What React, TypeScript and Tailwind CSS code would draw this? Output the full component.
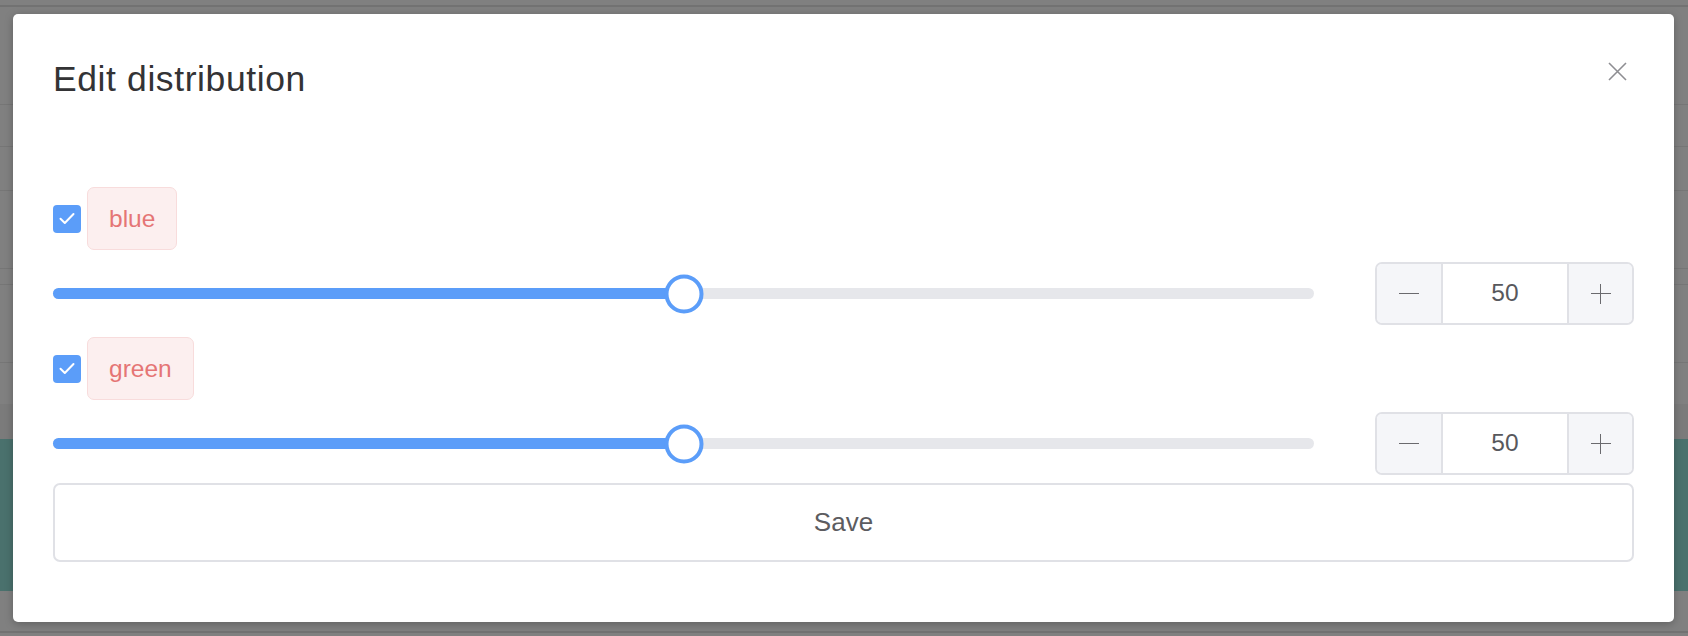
import React from "react";

const font = { fontFamily: '"Liberation Sans", Arial, sans-serif' };

function Check() {
  return (
    <div className="w-[28px] h-[28px] rounded-[4px] bg-[#5b9df9] flex items-center justify-center shrink-0">
      <svg width="16" height="13" viewBox="0 0 16 13" fill="none">
        <path d="M1.5 6.8 L5.8 11 L14.5 2" stroke="white" strokeWidth="2" strokeLinecap="round" strokeLinejoin="round" />
      </svg>
    </div>
  );
}

function Stepper({ value }: { value: number }) {
  return (
    <div className="w-[259px] h-[63px] shrink-0 flex border-2 border-[#e0e1e6] rounded-[7px] overflow-hidden">
      <div className="w-[66px] bg-[#f5f6f9] flex items-center justify-center border-r-2 border-[#e0e1e6]">
        <div className="w-[20px] h-[1.5px] bg-[#6a6a6e]" />
      </div>
      <div className="flex-1 bg-white flex items-center justify-center text-[24.5px] text-[#58585c]">{value}</div>
      <div className="w-[65px] bg-[#f5f6f9] flex items-center justify-center border-l-2 border-[#e0e1e6]">
        <div className="relative w-[20px] h-[20px]">
          <div className="absolute left-0 top-[9px] w-[20px] h-[1.5px] bg-[#6a6a6e]" />
          <div className="absolute top-0 left-[9px] h-[20px] w-[1.5px] bg-[#6a6a6e]" />
        </div>
      </div>
    </div>
  );
}

function Item({ label, value }: { label: string; value: number }) {
  return (
    <div className="flex flex-col">
      <div className="flex items-center gap-[6px] h-[63px]">
        <Check />
        <div className="h-[63px] px-[21px] pt-[2px] flex items-center rounded-[7px] bg-[#fcefef] border border-[#f8dcdc] text-[24.5px] text-[#e57575]">
          {label}
        </div>
      </div>
      <div className="mt-[12px] flex items-center h-[63px] gap-[61px]">
        <div className="relative flex-1 h-[11px] rounded-full bg-[#e6e7eb]">
          <div className="h-full rounded-full bg-[#5b9df9]" style={{ width: `${value}%` }} />
          <div
            className="absolute top-1/2 w-[39px] h-[39px] rounded-full bg-white border-[4px] border-[#5b9df9] -translate-x-1/2 -translate-y-1/2"
            style={{ left: `${value}%` }}
          />
        </div>
        <Stepper value={value} />
      </div>
    </div>
  );
}

export default function App() {
  return (
    <div className="relative w-[1688px] h-[636px] overflow-hidden bg-[#808080]" style={font}>
      {/* dimmed background page */}
      <div className="flex flex-col">
        <div className="h-[5px]" />
        <div className="h-[2px] bg-[#727272]" />
        <div className="h-[97px]" />
        <div className="h-[1px] bg-[#767676]" />
        <div className="h-[41px]" />
        <div className="h-[1px] bg-[#767676]" />
        <div className="h-[43px]" />
        <div className="h-[1px] bg-[#767676]" />
        <div className="h-[77px]" />
        <div className="h-[1px] bg-[#767676]" />
        <div className="h-[15px]" />
        <div className="h-[1px] bg-[#767676]" />
        <div className="h-[77px]" />
        <div className="h-[1px] bg-[#767676]" />
        <div className="h-[41px]" />
        <div className="h-[35px] bg-[#7b7b7b]" />
        <div className="h-[152px] bg-[#4a716d]" />
        <div className="h-[40px]" />
        <div className="h-[2px] bg-[#727272]" />
      </div>

      {/* modal */}
      <div className="absolute left-[13px] top-[14px] w-[1661px] h-[608px] bg-white rounded-[5px] shadow-[0_2px_8px_rgba(0,0,0,0.25)] px-[40px] pt-[44px] pb-[60px] flex flex-col">
        <button className="absolute top-[48px] right-[47px] w-[19px] h-[19px]" aria-label="close">
          <svg width="19" height="19" viewBox="0 0 19 19" fill="none">
            <path d="M1 1 L18 18 M18 1 L1 18" stroke="#8e8e92" strokeWidth="1.6" />
          </svg>
        </button>
        <div className="h-[42px] leading-[42px] text-[35.5px] tracking-[0.6px] text-[#333335]">Edit distribution</div>
        <div className="mt-[87px] flex flex-col gap-[12px]">
          <Item label="blue" value={50} />
          <Item label="green" value={50} />
        </div>
        <button className="mt-[8px] h-[79px] w-full rounded-[7px] border-2 border-[#e0e1e6] bg-white text-[26px] text-[#5c5c60]">
          Save
        </button>
      </div>
    </div>
  );
}
